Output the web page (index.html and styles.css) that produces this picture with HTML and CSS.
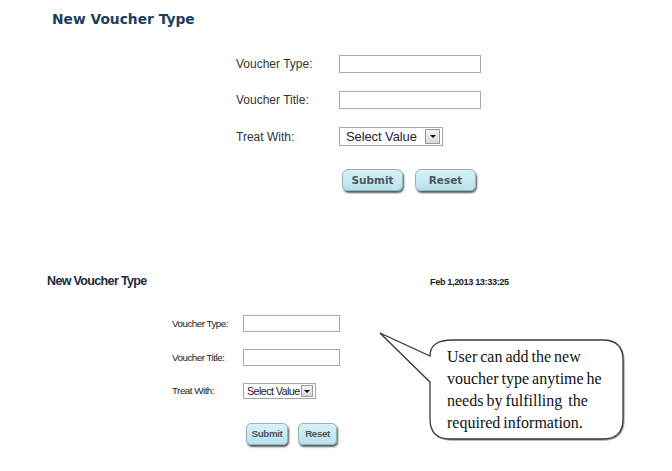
FILE: index.html
```html
<!DOCTYPE html>
<html>
<head>
<meta charset="utf-8">
<link rel="stylesheet" href="styles.css">
</head>
<body>
<section class="top">
  <h1 class="top-title">New Voucher Type</h1>
  <div class="top-form">
    <label class="top-label">Voucher Type:</label>
    <span class="top-input"></span>
    <label class="top-label">Voucher Title:</label>
    <span class="top-input"></span>
    <label class="top-label">Treat With:</label>
    <span class="top-select"><span class="sel-text">Select Value</span><span class="sel-arrow"><span class="tri"></span></span></span>
  </div>
  <div class="top-actions">
    <span class="btn btn-lg">Submit</span>
    <span class="btn btn-lg">Reset</span>
  </div>
</section>

<section class="bottom">
  <div class="bottom-head">
    <h2 class="bottom-title">New Voucher Type</h2>
    <span class="bottom-date">Feb 1,2013 13:33:25</span>
  </div>
  <div class="bottom-form">
    <label class="bottom-label">Voucher Type:</label>
    <span class="bottom-input"></span>
    <label class="bottom-label">Voucher Title:</label>
    <span class="bottom-input"></span>
    <label class="bottom-label">Treat With:</label>
    <span class="bottom-select"><span class="sel-text-sm">Select Value</span><span class="sel-arrow sel-arrow-sm"><span class="tri tri-sm"></span></span></span>
  </div>
  <div class="bottom-actions">
    <span class="btn btn-sm btn-submit">Submit</span>
    <span class="btn btn-sm btn-reset">Reset</span>
  </div>

  <div class="callout">
    <svg class="callout-shape" width="256" height="118" viewBox="0 0 256 118">
      <path d="M5 5 L55 28 C55 17 62 12 78 12 L228 12 Q248 12 248 32 L248 91 Q248 111 228 111 L75 111 Q55 111 55 91 L55 54 Z" fill="#fff" stroke="#3a3a3a" stroke-width="1.3" stroke-linejoin="miter"/>
    </svg>
    <p class="callout-text">User can add the new<br>voucher type anytime he<br>needs by fulfilling&nbsp; the<br>required information.</p>
  </div>
</section>
</body>
</html>
```

FILE: styles.css
```css
html, body {
  margin: 0;
  padding: 0;
  background: #fff;
}
body {
  font-family: "Liberation Sans", Arial, sans-serif;
  width: 672px;
  height: 471px;
  overflow: hidden;
}

/* ---------- top panel ---------- */
.top-title {
  margin: 0;
  padding: 11px 0 0 52px;
  font: 700 13.8px/16px "DejaVu Sans", sans-serif;
  color: #1d3e5e;
}
.top-form {
  display: grid;
  grid-template-columns: 103px 142px;
  row-gap: 18px;
  align-items: center;
  margin: 28px 0 0 236px;
}
.top-label {
  font-size: 12px;
  line-height: 14px;
  color: #333;
}
.top-input {
  display: block;
  box-sizing: border-box;
  width: 142px;
  height: 18px;
  border: 1px solid #a9a9a9;
  background: #fff;
}
.top-select {
  display: flex;
  align-items: center;
  justify-content: space-between;
  box-sizing: border-box;
  width: 104px;
  height: 19px;
  border: 1px solid #a6a6a6;
  padding: 0 2px 0 6px;
  background: #fff;
}
.sel-text {
  font-size: 13px;
  line-height: 15px;
  color: #2a2338;
  letter-spacing: -0.1px;
}
.sel-arrow {
  display: flex;
  align-items: center;
  justify-content: center;
  box-sizing: border-box;
  width: 15px;
  height: 15px;
  border: 1px solid #9a9a9a;
  background: linear-gradient(#f4f4f4, #d8d8d8);
}
.tri {
  width: 0;
  height: 0;
  border-left: 3px solid transparent;
  border-right: 3px solid transparent;
  border-top: 3px solid #111;
}
.top-actions {
  display: flex;
  gap: 12px;
  margin: 23px 0 0 342px;
}
.btn {
  display: flex;
  align-items: center;
  justify-content: center;
  box-sizing: border-box;
  background: linear-gradient(#d6f1f7, #b8e2ec);
  border: 1px solid #8db4bf;
  border-radius: 6px;
  box-shadow: 1px 2px 2px rgba(0, 0, 0, 0.65);
  color: #50565f;
}
.btn-lg {
  width: 61px;
  height: 22px;
  font: 700 10.5px/12px "DejaVu Sans", sans-serif;
}

/* ---------- bottom panel ---------- */
.bottom {
  position: relative;
  margin-top: 83px;
}
.bottom-head {
  display: grid;
  grid-template-columns: 383px auto;
  align-items: center;
  padding-left: 47px;
}
.bottom-title {
  margin: 0;
  font: 700 12.5px/14px "Liberation Sans", Arial, sans-serif;
  letter-spacing: -0.65px;
  color: #1c2b3a;
}
.bottom-date {
  font: 700 9.2px/12px "Liberation Sans", Arial, sans-serif;
  letter-spacing: -0.4px;
  color: #222;
  padding-top: 2px;
}
.bottom-form {
  display: grid;
  grid-template-columns: 71px 97px;
  row-gap: 17px;
  align-items: center;
  margin: 27px 0 0 172px;
}
.bottom-label {
  font-size: 9.8px;
  line-height: 12px;
  letter-spacing: -0.5px;
  color: #222;
}
.bottom-input {
  display: block;
  box-sizing: border-box;
  width: 97px;
  height: 17px;
  border: 1px solid #a9a9a9;
  background: #fff;
}
.bottom-select {
  display: flex;
  align-items: center;
  justify-content: space-between;
  box-sizing: border-box;
  width: 73px;
  height: 16px;
  border: 1px solid #a6a6a6;
  padding: 0 2px 0 3px;
  background: #fff;
}
.sel-text-sm {
  font-size: 10.8px;
  line-height: 12px;
  letter-spacing: -0.6px;
  color: #222;
}
.sel-arrow-sm {
  width: 12px;
  height: 12px;
}
.bottom-actions {
  display: flex;
  gap: 10px;
  margin: 24px 0 0 246px;
}
.btn-sm {
  height: 22px;
  font: 700 9.8px/12px "Liberation Sans", Arial, sans-serif;
  letter-spacing: -0.4px;
  border-radius: 5px;
}
.btn-submit { width: 42px; }
.btn-reset { width: 39px; }

/* ---------- callout ---------- */
.callout {
  position: absolute;
  left: 375px;
  top: 54px;
  width: 256px;
  height: 118px;
}
.callout-shape {
  position: absolute;
  left: 0;
  top: 0;
  filter: drop-shadow(1px 1px 0 rgba(0, 0, 0, 0.35));
}
.callout-text {
  position: absolute;
  left: 72px;
  top: 18px;
  margin: 0;
  font: 16px/22px "Liberation Serif", "Times New Roman", serif;
  word-spacing: -1px;
  color: #111;
  white-space: nowrap;
}
```
